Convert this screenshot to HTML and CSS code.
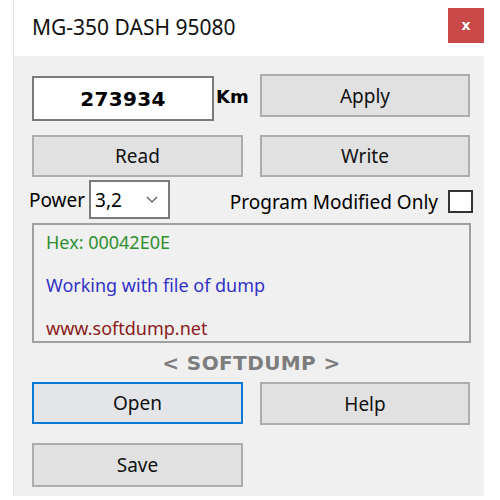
FILE: index.html
```html
<!DOCTYPE html>
<html lang="en">
<head>
    <meta charset="UTF-8">
    <title>MG-350 DASH 95080</title>
    <link rel="stylesheet" href="styles.css">
</head>
<body>
    <div class="window">
        <div class="titlebar">
            <span class="title">MG-350 DASH 95080</span>
            <span class="close-btn">x</span>
        </div>

        <div class="content">
            <div class="grid">
                <div class="km-cell">
                    <div class="km-input">273934</div>
                    <span class="km-label">Km</span>
                </div>
                <div class="btn btn-apply">Apply</div>

                <div class="btn btn-read">Read</div>
                <div class="btn btn-read">Write</div>
            </div>

            <div class="options">
                <div class="power">
                    <span>Power</span>
                    <div class="select">
                        <span>3,2</span>
                        <svg width="12" height="7" viewBox="0 0 12 7"><path d="M1 1 L6 6 L11 1" fill="none" stroke="#555" stroke-width="1.2"/></svg>
                    </div>
                </div>
                <div class="modified">
                    <span>Program Modified Only</span>
                    <span class="checkbox"></span>
                </div>
            </div>

            <div class="info-box">
                <p class="hex">Hex: 00042E0E</p>
                <p class="working">Working with file of dump</p>
                <p class="site">www.softdump.net</p>
            </div>

            <div class="brand">&lt; SOFTDUMP &gt;</div>

            <div class="grid grid-bottom">
                <div class="btn btn-open">Open</div>
                <div class="btn">Help</div>
                <div class="btn btn-save">Save</div>
            </div>
        </div>
    </div>
</body>
</html>
```

FILE: styles.css
```css
* {
    margin: 0;
    padding: 0;
    box-sizing: border-box;
}

body {
    font-family: 'Noto Sans', 'Open Sans', sans-serif;
    background: #ffffff;
    width: 500px;
    height: 500px;
    overflow: hidden;
    color: #000;
}

.window {
    margin-left: 13px;
    width: 471px;
    height: 496px;
    border-left: 1px solid #e2e2e2;
    background: #f0f0f0;
}

.titlebar {
    height: 56px;
    background: #ffffff;
    display: flex;
    align-items: center;
    justify-content: space-between;
    padding-left: 18px;
}

.title {
    font-size: 21px;
    color: #111;
    margin-top: -2px;
}

.close-btn {
    width: 36px;
    height: 35px;
    margin-top: -6px;
    background: #c94848;
    color: #fff;
    font-family: 'DejaVu Sans', sans-serif;
    font-weight: bold;
    font-size: 14px;
    display: flex;
    align-items: center;
    justify-content: center;
}

.content {
    padding: 18px 13px 0 18px;
}

.grid {
    display: grid;
    grid-template-columns: 211px 210px;
    column-gap: 17px;
    row-gap: 14px;
}

.km-cell {
    display: flex;
    align-items: flex-start;
    padding-top: 2px;
}

.km-input {
    flex-shrink: 0;
    width: 182px;
    height: 45px;
    background: #fff;
    border: 2px solid #7a7a7a;
    font-family: 'DejaVu Sans', sans-serif;
    font-weight: bold;
    font-size: 20px;
    display: flex;
    align-items: center;
    justify-content: center;
    letter-spacing: 0.3px;
}

.km-label {
    flex-shrink: 0;
    font-family: 'DejaVu Sans', sans-serif;
    font-weight: bold;
    font-size: 18px;
    margin-left: 2px;
    margin-top: 10px;
}

.btn {
    height: 43px;
    background: #e1e1e1;
    border: 2px solid #adadad;
    font-size: 19px;
    display: flex;
    align-items: center;
    justify-content: center;
    color: #111;
}

.btn-read {
    height: 42px;
}

.options {
    display: flex;
    justify-content: space-between;
    align-items: center;
    margin-top: 3px;
    height: 39px;
}

.power {
    display: flex;
    align-items: center;
    font-size: 19px;
    margin-left: -3px;
    gap: 4px;
}

.select {
    width: 81px;
    height: 39px;
    background: #fff;
    border: 2px solid #7a7a7a;
    display: flex;
    align-items: center;
    justify-content: space-between;
    padding: 0 10px 0 4px;
    font-size: 19px;
}

.modified {
    display: flex;
    align-items: center;
    font-size: 19px;
    margin-right: -2px;
    margin-top: 4px;
}

.checkbox {
    width: 25px;
    height: 23px;
    background: #fff;
    border: 2px solid #333;
    margin-left: 10px;
}

.info-box {
    margin-top: 4px;
    height: 120px;
    border: 2px solid #a0a0a0;
    padding: 2px 12px 0;
    font-size: 18px;
}

.info-box p {
    height: 43px;
    line-height: 30px;
}

.hex {
    color: #2f8f2f;
}

.working {
    color: #3232c8;
}

.site {
    color: #8b1c1c;
}

.brand {
    text-align: center;
    font-family: 'DejaVu Sans', sans-serif;
    font-weight: bold;
    font-size: 20px;
    letter-spacing: 0.4px;
    color: #7d7d7d;
    height: 39px;
    line-height: 26px;
    padding-top: 7px;
}

.grid-bottom {
    row-gap: 18px;
}

.btn-open {
    height: 42px;
    border: 2px solid #0a79d4;
    background: #e3e5e8;
}

.btn-save {
    height: 44px;
}
```
